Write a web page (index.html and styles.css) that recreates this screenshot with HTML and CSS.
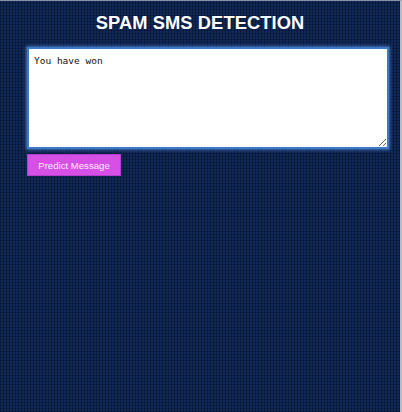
FILE: index.html
```html
<!DOCTYPE html>
<html>
<head>
<meta charset="utf-8">
<link rel="stylesheet" href="styles.css">
</head>
<body>
<div class="page">
  <h1 class="title">SPAM SMS DETECTION</h1>
  <form class="form">
    <textarea class="message">You have won</textarea>
    <button type="button" class="predict">Predict Message</button>
  </form>
</div>
</body>
</html>
```
FILE: styles.css
```css
html, body {
  margin: 0;
  padding: 0;
  height: 100%;
}
body {
  background-color: #0f2858;
  background-image:
    repeating-linear-gradient(90deg, rgba(0,0,0,0.28) 0 1px, transparent 1px 3px),
    repeating-linear-gradient(0deg, rgba(0,0,0,0.22) 0 1px, transparent 1px 3px);
  font-family: "Liberation Sans", Arial, sans-serif;
  overflow: hidden;
}
.page {
  box-sizing: border-box;
  height: 412px;
  width: 402px;
  border-top: 1px solid #8a93a6;
  border-right: 2px solid #b8bcc4;
  padding: 0 13px 0 27px;
}
.title {
  margin: 11px 0 0;
  text-align: center;
  color: #ffffff;
  font-size: 18.3px;
  font-weight: bold;
  line-height: 22px;
  letter-spacing: 0.1px;
  transform: translateX(-7px);
}
.form {
  display: flex;
  flex-direction: column;
  align-items: flex-start;
  margin-top: 13px;
}
.message {
  box-sizing: border-box;
  width: 362px;
  height: 102px;
  border: 2px solid #3d78c8;
  box-shadow: 0 0 3px 1px rgba(90,150,230,0.7);
  background: #fff;
  font-family: "DejaVu Sans Mono", "Liberation Mono", monospace;
  font-size: 9.5px;
  color: #111;
  padding: 6px 5px;
  resize: vertical;
  outline: none;
}
.predict {
  margin-top: 5px;
  width: 94px;
  height: 22px;
  background: #d650e6;
  border: 1px solid #b63fcf;
  color: #fbeefc;
  font-family: "Liberation Sans", Arial, sans-serif;
  font-size: 9.6px;
  padding: 0;
}
```
